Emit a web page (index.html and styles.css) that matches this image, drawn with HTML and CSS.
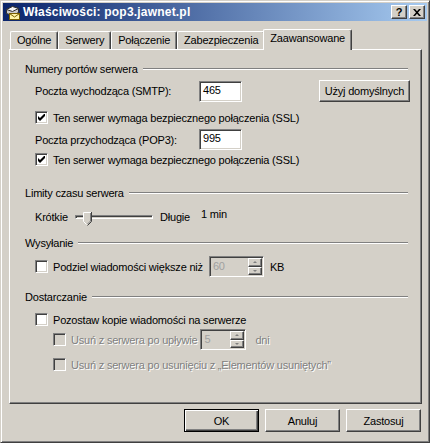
FILE: index.html
```html
<!doctype html>
<html>

<head>
    <meta charset="utf8">
    <title>Właściwości: pop3.jawnet.pl</title>
    <link rel="stylesheet" href="styles.css">
</head>

<body>
    <div class="window">
        <div class="titlebar">
            <svg class="app-icon" width="16" height="16" viewBox="0 0 16 16">
                <polygon points="2.5,5.5 8.5,2.5 14.5,4.5 14.5,8.5 8.5,11.5 2.5,9.5" fill="#c8c8c8" stroke="#303030" />
                <polygon points="2.5,5.5 8.5,2.5 14.5,4.5 8.5,7.5" fill="#f4f4f4" stroke="#303030" />
                <rect x="5.5" y="9.5" width="10" height="6" fill="#fff6a8" stroke="#7a6000" />
                <polyline points="5.5,9.5 10.5,13 15.5,9.5" fill="none" stroke="#7a6000" />
            </svg>
            <span class="title">Właściwości: pop3.jawnet.pl</span>
            <span class="tbtn help">?</span>
            <span class="tbtn close">
                <svg width="8" height="7" viewBox="0 0 8 7">
                    <path d="M0 0h2l2 2.2L6 0h2L5 3.5 8 7H6L4 4.8 2 7H0l3-3.5z" fill="#000" />
                </svg>
            </span>
        </div>

        <div class="tabs">
            <span class="tab">Ogólne</span>
            <span class="tab">Serwery</span>
            <span class="tab">Połączenie</span>
            <span class="tab">Zabezpieczenia</span>
            <span class="tab active">Zaawansowane</span>
        </div>

        <div class="panel">
            <div class="group g-ports"><span>Numery portów serwera</span><i></i></div>
            <div class="row r-smtp">
                <span class="lbl">Poczta wychodząca (SMTP):</span>
                <span class="edit">465</span>
                <span class="btn btn-def">Użyj domyślnych</span>
            </div>
            <div class="check c-ssl1"><span class="box checked"><svg width="7" height="7" viewBox="0 0 7 7"><polygon points="0,2 2,4 6,0 7,0 7,2 2,7 0,5" fill="#000" /></svg></span>Ten serwer wymaga bezpiecznego połączenia (SSL)</div>
            <div class="row r-pop">
                <span class="lbl">Poczta przychodząca (POP3):</span>
                <span class="edit">995</span>
            </div>
            <div class="check c-ssl2"><span class="box checked"><svg width="7" height="7" viewBox="0 0 7 7"><polygon points="0,2 2,4 6,0 7,0 7,2 2,7 0,5" fill="#000" /></svg></span>Ten serwer wymaga bezpiecznego połączenia (SSL)</div>

            <div class="group g-time"><span>Limity czasu serwera</span><i></i></div>
            <div class="row r-slider">
                <span class="short">Krótkie</span>
                <div class="slider">
                    <div class="track"></div>
                    <svg class="thumb" width="9" height="14" viewBox="0 0 9 14">
                        <polygon points="0,0 9,0 9,9.5 4.5,14 0,9.5" fill="#d4d0c8" />
                        <path d="M0.5 9.5V0.5H8" fill="none" stroke="#fff" />
                        <path d="M8.5 0V9.5L4.5 13.5" fill="none" stroke="#404040" />
                        <path d="M7.5 1V9L4.5 12" fill="none" stroke="#808080" />
                        <path d="M0.5 9.5L3.5 12.5" fill="none" stroke="#fff" />
                    </svg>
                </div>
                <span class="long">Długie</span>
                <span class="minutes">1 min</span>
            </div>

            <div class="group g-send"><span>Wysyłanie</span><i></i></div>
            <div class="row r-split">
                <span class="box"></span>
                <span class="check-text">Podziel wiadomości większe niż</span>
                <span class="spin s-size">
                    <span class="val">60</span>
                    <span class="arrows"><span><b class="up"></b></span><span><b class="down"></b></span></span>
                </span>
                <span class="unit">KB</span>
            </div>

            <div class="group g-deliver"><span>Dostarczanie</span><i></i></div>
            <div class="check c-keep"><span class="box"></span>Pozostaw kopie wiadomości na serwerze</div>
            <div class="row r-days">
                <span class="box off"></span>
                <span class="check-text off-text">Usuń z serwera po upływie</span>
                <span class="spin s-days">
                    <span class="val">5</span>
                    <span class="arrows"><span><b class="up"></b></span><span><b class="down"></b></span></span>
                </span>
                <span class="unit off-text">dni</span>
            </div>
            <div class="check sub c-deleted off-text"><span class="box off"></span>Usuń z serwera po usunięciu z „Elementów usuniętych”</div>
        </div>

        <div class="buttons">
            <span class="btn default">OK</span>
            <span class="btn">Anuluj</span>
            <span class="btn">Zastosuj</span>
        </div>
    </div>
</body>

</html>
```

FILE: styles.css
```css
    * {
        box-sizing: border-box;
    }
    html,
    body {
        margin: 0px;
        padding: 0px;
        background-color: #D4D0C8;
    }
    body {
        font-family: "Liberation Sans", Arial, sans-serif;
        font-size: 11px;
        letter-spacing: -0.2px;
        color: #000;
    }

    .window {
        width: 430px;
        height: 443px;
        display: flex;
        flex-direction: column;
        padding: 2px;
        border: 1px solid;
        border-color: #D4D0C8 #404040 #404040 #D4D0C8;
        box-shadow: inset 1px 1px #fff, inset -1px -1px #808080;
        background-color: #D4D0C8;
    }

    .titlebar {
        height: 18px;
        flex: none;
        display: flex;
        align-items: center;
        padding: 0 2px 0 1px;
        background: linear-gradient(to right, #0A246A, #A6CAF0);
        color: #fff;
    }
    .app-icon {
        flex: none;
    }
    .title {
        flex: 1;
        margin-left: 3px;
        font-size: 12px;
        font-weight: bold;
        letter-spacing: 0.2px;
    }
    .tbtn {
        width: 16px;
        height: 14px;
        display: flex;
        align-items: center;
        justify-content: center;
        border: 1px solid;
        border-color: #fff #404040 #404040 #fff;
        box-shadow: inset -1px -1px #808080;
        background-color: #D4D0C8;
        color: #000;
        font-weight: bold;
    }
    .tbtn.close {
        margin-left: 2px;
    }

    .tabs {
        height: 20px;
        flex: none;
        display: flex;
        align-items: flex-end;
        margin-top: 8px;
        padding-left: 7px;
        position: relative;
        z-index: 1;
    }
    .tab {
        height: 18px;
        padding: 2px 6px 0;
        border-top: 1px solid #fff;
        border-left: 1px solid #fff;
        border-right: 1px solid #404040;
        border-radius: 2px 2px 0 0;
        box-shadow: inset -1px 0 #808080;
    }
    .tab.active {
        height: 21px;
        margin: 0 -2px -1px;
        padding: 2px 6px 0;
        background-color: #D4D0C8;
        position: relative;
    }

    .panel {
        width: 413px;
        height: 355px;
        flex: none;
        margin-left: 6px;
        padding: 0 13px 0 15px;
        border: 1px solid;
        border-color: #fff #404040 #404040 #fff;
        box-shadow: inset -1px -1px #808080;
    }

    .group {
        height: 14px;
        display: flex;
        align-items: center;
    }
    .group i {
        flex: 1;
        height: 2px;
        margin-left: 5px;
        border-top: 1px solid #808080;
        border-bottom: 1px solid #fff;
    }
    .g-ports { margin-top: 12px; }
    .g-time { margin-top: 20px; }
    .g-send { margin-top: 9px; }
    .g-deliver { margin-top: 13px; }

    .row {
        display: flex;
        align-items: center;
        margin-left: 10px;
    }
    .r-smtp { margin-top: 4px; }
    .r-pop { margin-top: 5px; }
    .r-slider { margin-top: 7px; height: 20px; }
    .r-split { margin-top: 6px; }
    .r-days { margin-top: 3px; margin-left: 28px; }

    .lbl {
        width: 164px;
    }

    .edit {
        width: 43px;
        height: 21px;
        padding: 0 0 0 3px;
        line-height: 17px;
        border: 1px solid;
        border-color: #808080 #fff #fff #808080;
        box-shadow: inset 1px 1px #404040, inset -1px -1px #D4D0C8;
        background-color: #fff;
    }

    .btn {
        width: 75px;
        height: 23px;
        display: flex;
        align-items: center;
        justify-content: center;
        border: 1px solid;
        border-color: #fff #404040 #404040 #fff;
        box-shadow: inset -1px -1px #808080;
        background-color: #D4D0C8;
    }
    .btn.default {
        border-color: #000;
        box-shadow: inset 1px 1px #fff, inset -1px -1px #404040, inset -2px -2px #808080;
    }
    .btn-def {
        width: 91px;
        height: 22px;
        margin-left: auto;
        margin-right: -2px;
    }

    .check {
        height: 13px;
        display: flex;
        align-items: center;
        margin-left: 10px;
    }
    .check.sub {
        margin-left: 28px;
    }
    .c-ssl1 { margin-top: 9px; }
    .c-ssl2 { margin-top: 3px; }
    .c-keep { margin-top: 9px; }
    .c-deleted { margin-top: 8px; }

    .box {
        width: 13px;
        height: 13px;
        flex: none;
        display: flex;
        align-items: center;
        justify-content: center;
        margin-right: 5px;
        border: 1px solid;
        border-color: #808080 #fff #fff #808080;
        box-shadow: inset 1px 1px #404040, inset -1px -1px #D4D0C8;
        background-color: #fff;
    }
    .box.off {
        background-color: #D4D0C8;
    }
    .off-text {
        color: #808080;
        text-shadow: 1px 1px #fff;
    }

    .short {
        width: 40px;
    }
    .slider {
        width: 78px;
        height: 20px;
        margin-right: 7px;
        position: relative;
    }
    .track {
        position: absolute;
        left: 0;
        right: 0;
        top: 8px;
        height: 4px;
        border: 1px solid;
        border-color: #808080 #fff #fff #808080;
        box-shadow: inset 1px 1px #404040;
    }
    .thumb {
        position: absolute;
        left: 8px;
        top: 5px;
    }
    .long {
        width: 41px;
    }
    .minutes {
        align-self: flex-start;
        margin-top: 1px;
    }

    .spin {
        height: 21px;
        display: flex;
        border: 1px solid;
        border-color: #808080 #fff #fff #808080;
        box-shadow: inset 1px 1px #404040, inset -1px -1px #D4D0C8;
        background-color: #D4D0C8;
        color: #a0a0a0;
        padding: 1px;
    }
    .s-size {
        width: 55px;
        margin-left: 6px;
    }
    .s-days {
        width: 46px;
        margin-left: 3px;
    }
    .spin .val {
        flex: 1;
        padding-left: 2px;
        line-height: 17px;
    }
    .arrows {
        width: 14px;
        display: flex;
        flex-direction: column;
    }
    .arrows span {
        flex: 1;
        display: flex;
        align-items: center;
        justify-content: center;
        border: 1px solid;
        border-color: #fff #404040 #404040 #fff;
        box-shadow: inset -1px -1px #808080;
    }
    .arrows b {
        width: 0;
        height: 0;
        border-left: 2px solid transparent;
        border-right: 2px solid transparent;
    }
    .arrows b.up {
        border-bottom: 2px solid #808080;
    }
    .arrows b.down {
        border-top: 2px solid #808080;
    }
    .unit {
        margin-left: 6px;
    }
    .r-days .unit {
        margin-left: 9px;
    }

    .buttons {
        flex: none;
        display: flex;
        justify-content: flex-end;
        gap: 6px;
        margin-top: 5px;
        padding-right: 6px;
    }
```
